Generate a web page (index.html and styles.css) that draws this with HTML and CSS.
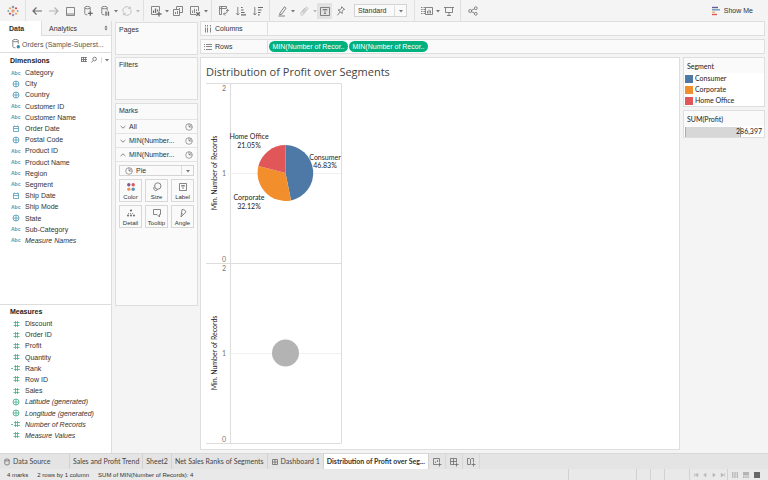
FILE: index.html
```html
<!DOCTYPE html>
<html lang="en">
<head>
<meta charset="utf-8">
<title>Distribution of Profit over Segments</title>
<link rel="stylesheet" href="styles.css">
</head>
<body>
<svg class="sprite" aria-hidden="true">
  <symbol id="globe" viewBox="0 0 10 8"><circle cx="5" cy="4" r="3"/><path d="M5 1v6M2 4h6"/></symbol>
  <symbol id="date" viewBox="0 0 10 8"><path d="M2.500 1.500h5v5h-5zM2.500 3.500h5M3.500 .5v1M6.500 .5v1"/></symbol>
  <symbol id="num" viewBox="0 0 10 8"><path d="M4.500 1v6M6.500 1v6M2.500 2.500h6M2.500 5.500h6"/></symbol>
  <symbol id="calc" viewBox="0 0 10 8"><path d="M4.500 1v6M6.500 1v6M3 2.500h6M3 5.500h6M0 4.500h2"/></symbol>
  <symbol id="caret" viewBox="0 0 6 6"><path d="M1 2h4L3 4.6z" fill="#777" stroke="none"/></symbol>
  <symbol id="down" viewBox="0 0 6 6"><path d="M.6 2L3 4.2 5.4 2"/></symbol>
  <symbol id="up" viewBox="0 0 6 6"><path d="M.6 4L3 1.8 5.4 4"/></symbol>
  <symbol id="pie" viewBox="0 0 8 8"><circle cx="4" cy="4" r="3.300"/><path d="M4 4V.7M4 4l2.300-2.300M4 4h3.300"/></symbol>
  <symbol id="db" viewBox="0 0 12 12"><ellipse cx="5.500" cy="2.600" rx="2.700" ry="1.200"/><path d="M2.800 2.600v6c0 .8 1 1.200 2.600 1.200M8.200 2.600v3.200"/></symbol>
</svg>

<header class="toolbar">
  <button class="tool logo" aria-label="Start page"><svg viewBox="0 0 12 12"><path d="M6 4v4M4 6h4" stroke="#e8762d"/><path d="M6 .8v2.400M4.800 2h2.400M6 8.800v2.400M4.800 10h2.400" stroke="#5b6591"/><path d="M3 2.200v2.200M1.900 3.300h2.200M9 7.600v2.200M7.900 8.700h2.200" stroke="#eb912c"/><path d="M9 2.200v2.200M7.900 3.300h2.200M3 7.600v2.200M1.900 8.700h2.200" stroke="#c72035"/><path d="M1.300 5.200v1.600M.5 6h1.600M10.700 5.200v1.600M9.900 6h1.600" stroke="#59879b"/></svg></button>
  <span class="sep"></span>
  <button class="tool" aria-label="Undo"><svg viewBox="0 0 12 12"><path d="M5.500 2.500L2 6l3.500 3.500M2 6h9" stroke-width="1.200"/></svg></button>
  <button class="tool pale" aria-label="Redo"><svg viewBox="0 0 12 12"><path d="M6.500 2.500L10 6 6.500 9.500M10 6H1" stroke-width="1.200"/></svg></button>
  <button class="tool" aria-label="Save"><svg viewBox="0 0 12 12"><path d="M1.500 2.500h8v8h-8z"/><path d="M2 8h7v2H2z" fill="#bbb" stroke="none"/></svg></button>
  <button class="tool" aria-label="New data source"><svg viewBox="0 0 12 12"><use href="#db"/><path d="M8.300 6v4.800M5.900 8.400h4.800" stroke-width="1.300"/></svg></button>
  <button class="tool" aria-label="Pause updates"><svg viewBox="0 0 12 12"><use href="#db"/><path d="M7 6.500v4.200M9.400 6.500v4.200" stroke-width="1.400"/></svg></button>
  <button class="drop" aria-label="Update options"><svg viewBox="0 0 6 6"><use href="#caret"/></svg></button>
  <button class="tool pale" aria-label="Refresh"><svg viewBox="0 0 12 12"><path d="M2.200 7.300A4 4 0 0 1 9 3.200M9.800 4.700A4 4 0 0 1 3 8.800M9.400 1.600v2H7.300M2.600 10.400v-2h2.100"/></svg></button>
  <button class="drop pale" aria-label="Refresh options"><svg viewBox="0 0 6 6"><use href="#caret"/></svg></button>
  <span class="sep"></span>
  <button class="tool" aria-label="New worksheet"><svg viewBox="0 0 12 12"><path d="M7 9.500H1.500v-8h8v4.500"/><path d="M3.500 8V5.600M5.500 8V3.400M7.500 6.500V4.500" stroke-width="1.200"/><path d="M9 6.500v5M6.500 9h5" stroke-width="1.300"/></svg></button>
  <button class="drop" aria-label="New sheet options"><svg viewBox="0 0 6 6"><use href="#caret"/></svg></button>
  <button class="tool" aria-label="Duplicate"><svg viewBox="0 0 12 12"><path d="M4.500 4.500v-3h6v6h-3M1.500 4.500h6v6h-6zM3.500 9V7M5.500 9V6M7.500 4V3"/></svg></button>
  <button class="tool" aria-label="Clear sheet"><svg viewBox="0 0 12 12"><path d="M7 9.500H1.500v-8h8v4.500M3.500 8V5.600M5.500 8V3.800M7.500 6V4.500"/><path d="M7.300 7.200l3.600 3.600M10.900 7.200l-3.600 3.600" stroke-width="1.300"/></svg></button>
  <button class="drop" aria-label="Clear options"><svg viewBox="0 0 6 6"><use href="#caret"/></svg></button>
  <span class="sep"></span>
  <button class="tool swap" aria-label="Swap rows and columns"><svg viewBox="0 0 12 12"><path d="M1.500 1.500h7v2h-5v6h-2zM3.500 1.500v2h-2M9.500 4.500c0 3-1 4.500-4 4.500M8 6l1.500-1.500L11 6M7 7.500L5.500 9 7 10.500"/></svg></button>
  <button class="tool" aria-label="Sort ascending"><svg viewBox="0 0 12 12"><path d="M2.800 2v8M1.200 8.300L2.800 10l1.600-1.700"/><path d="M6 2.500h1.600M6 5h2.600M6 7.500h3.600M6 9.800h5" stroke-width="1.200"/></svg></button>
  <button class="tool" aria-label="Sort descending"><svg viewBox="0 0 12 12"><path d="M2.800 2v8M1.200 8.300L2.800 10l1.600-1.700"/><path d="M6 2.500h5M6 5h3.600M6 7.500h2.600M6 9.800h1.600" stroke-width="1.200"/></svg></button>
  <span class="sep"></span>
  <button class="tool" aria-label="Highlight"><svg viewBox="0 0 12 12"><path d="M4 8l4.400-6.200 1.700 1.300L5.800 9.200 3.600 9.800zM2.500 11h6.500"/></svg></button>
  <button class="drop" aria-label="Highlight options"><svg viewBox="0 0 6 6"><use href="#caret"/></svg></button>
  <button class="tool pale" aria-label="Group"><svg viewBox="0 0 12 12"><path d="M3.800 7.600l3.800-4.800c1-1.200 2.800.2 1.800 1.400L5.200 9.500c-1.300 1.500-3.500-.1-2.200-1.700l3.700-4.600M4.800 8.300l3.600-4.500"/></svg></button>
  <button class="drop pale" aria-label="Group options"><svg viewBox="0 0 6 6"><use href="#caret"/></svg></button>
  <button class="tool on" aria-label="Show mark labels" aria-pressed="true"><svg viewBox="0 0 12 12"><path d="M1.500 2.500h9v8h-9zM4 5.500v-1h4v1M6 4.500v4M5 8.500h2"/></svg></button>
  <button class="tool" aria-label="Fix axes"><svg viewBox="0 0 12 12"><path d="M6.600 1.800l3 2.600-1.300.4-1.200 1.700.2 2L3 5l2.200-.3 1.300-1.600zM5 7L2.400 10.300"/></svg></button>
  <span class="pick fit"><select aria-label="Fit"><option>Standard</option><option>Entire View</option></select><svg viewBox="0 0 6 6"><use href="#caret"/></svg></span>
  <span class="sep"></span>
  <button class="tool" aria-label="Show cards"><svg viewBox="0 0 12 12"><path d="M0 2.500h4M0 4.500h4M0 6.500h4M0 8.500h4" stroke-dasharray="1 .5"/><path d="M4.500 2.500h7v7h-7zM6.500 8.500V6M8 8.500v-4M9.500 8.500v-3"/></svg></button>
  <button class="drop" aria-label="Card options"><svg viewBox="0 0 6 6"><use href="#caret"/></svg></button>
  <button class="tool" aria-label="Presentation mode"><svg viewBox="0 0 12 12"><path d="M1 2.500h10M2.500 2.500v5h7v-5M6 7.500v3M4 10.500h4"/></svg></button>
  <span class="sep"></span>
  <button class="tool" aria-label="Share"><svg viewBox="0 0 12 12"><circle cx="3.200" cy="6" r="1.500"/><circle cx="8.800" cy="3.200" r="1.400"/><circle cx="8.800" cy="8.800" r="1.400"/><path d="M4.500 5.300l3-1.500M4.500 6.700l3 1.500"/></svg></button>
  <button class="showme"><svg viewBox="0 0 10 10"><path d="M1 1.500h6" stroke="#6b5b95"/><path d="M1 3.800h8" stroke="#6f98c2"/><path d="M1 6.200h3" stroke="#f5b07a"/><path d="M1 8.500h5" stroke="#e15759"/></svg>Show Me</button>
</header>

<div class="work">
  <aside class="data">
    <div class="panes">
      <button class="pane current">Data</button>
      <button class="pane">Analytics<svg viewBox="0 0 6 8"><path d="M1.500 3.400h3L3 1.600zM1.500 4.600h3L3 6.400z" fill="#666" stroke="none"/></svg></button>
    </div>
    <a class="source" href="#"><svg viewBox="0 0 12 12"><use href="#db"/><circle cx="8.300" cy="8.800" r="1.700" fill="#3a8aa8" stroke="none"/></svg>Orders (Sample-Superst...</a>
    <section class="fields dims">
      <header><h2>Dimensions</h2>
        <button class="mini" aria-label="View data"><svg viewBox="0 0 8 8"><path d="M1 1.500h6M1 3.500h6M1 5.500h6M1.500 1v5M3.500 1v5M5.500 1v5"/></svg></button>
        <button class="mini" aria-label="Find field"><svg viewBox="0 0 8 8"><circle cx="4.600" cy="3" r="1.800"/><path d="M3.300 4.300L1.500 6.500"/></svg></button>
        <button class="mini more" aria-label="Menu"><svg viewBox="0 0 6 6"><use href="#caret"/></svg></button>
      </header>
      <ul>
        <li><i>Abc</i>Category</li>
        <li><svg><use href="#globe"/></svg>City</li>
        <li><svg><use href="#globe"/></svg>Country</li>
        <li><i>Abc</i>Customer ID</li>
        <li><i>Abc</i>Customer Name</li>
        <li><svg><use href="#date"/></svg>Order Date</li>
        <li><svg><use href="#globe"/></svg>Postal Code</li>
        <li><i>Abc</i>Product ID</li>
        <li><i>Abc</i>Product Name</li>
        <li><i>Abc</i>Region</li>
        <li><i>Abc</i>Segment</li>
        <li><svg><use href="#date"/></svg>Ship Date</li>
        <li><i>Abc</i>Ship Mode</li>
        <li><svg><use href="#globe"/></svg>State</li>
        <li><i>Abc</i>Sub-Category</li>
        <li class="auto"><i>Abc</i>Measure Names</li>
      </ul>
    </section>
    <section class="fields meas">
      <header><h2>Measures</h2></header>
      <ul>
        <li><svg><use href="#num"/></svg>Discount</li>
        <li><svg><use href="#num"/></svg>Order ID</li>
        <li><svg><use href="#num"/></svg>Profit</li>
        <li><svg><use href="#num"/></svg>Quantity</li>
        <li><svg><use href="#calc"/></svg>Rank</li>
        <li><svg><use href="#num"/></svg>Row ID</li>
        <li><svg><use href="#num"/></svg>Sales</li>
        <li class="auto"><svg><use href="#globe"/></svg>Latitude (generated)</li>
        <li class="auto"><svg><use href="#globe"/></svg>Longitude (generated)</li>
        <li class="auto"><svg><use href="#calc"/></svg>Number of Records</li>
        <li class="auto"><svg><use href="#num"/></svg>Measure Values</li>
      </ul>
    </section>
  </aside>

  <div class="cards">
    <section class="card pages"><h3>Pages</h3></section>
    <section class="card filters"><h3>Filters</h3></section>
    <section class="card marks">
      <h3>Marks</h3>
      <button class="layer"><svg viewBox="0 0 6 6"><use href="#down"/></svg><span>All</span><svg class="round" viewBox="0 0 8 8"><use href="#pie"/></svg></button>
      <button class="layer"><svg viewBox="0 0 6 6"><use href="#down"/></svg><span>MIN(Number...</span><svg class="round" viewBox="0 0 8 8"><use href="#pie"/></svg></button>
      <button class="layer"><svg viewBox="0 0 6 6"><use href="#up"/></svg><span>MIN(Number...</span><svg class="round" viewBox="0 0 8 8"><use href="#pie"/></svg></button>
      <div class="shelf-body">
        <span class="pick mark"><svg class="round" viewBox="0 0 8 8"><use href="#pie"/></svg><select aria-label="Mark type"><option>Pie</option><option>Bar</option></select><svg viewBox="0 0 6 6"><use href="#caret"/></svg></span>
        <div class="encodings">
          <button><svg viewBox="0 0 10 10"><g stroke="none"><circle cx="2.800" cy="2.800" r="1.700" fill="#7a5c91"/><circle cx="7.200" cy="2.800" r="1.700" fill="#e15759"/><circle cx="2.800" cy="7.200" r="1.700" fill="#f2955b"/><circle cx="7.200" cy="7.200" r="1.700" fill="#5b8fc0"/></g></svg>Color</button>
          <button><svg viewBox="0 0 10 10"><circle cx="5.800" cy="4" r="3.200"/><path d="M2.700 4.600a2 2 0 1 0 2.300 3.600l.6-1"/></svg>Size</button>
          <button><svg viewBox="0 0 10 10"><path d="M1.500 1.500h7v7h-7zM3.500 4.500v-1h3v1M5 3.500v3.500"/></svg>Label</button>
          <button><svg viewBox="0 0 10 10"><g fill="#666" stroke="none"><circle cx="5" cy="2.500" r="1.100"/><circle cx="2" cy="7.500" r="1"/><circle cx="5" cy="7.500" r="1"/><circle cx="8" cy="7.500" r="1"/></g><path d="M2 5.500h6" stroke-dasharray="1 1"/></svg>Detail</button>
          <button><svg viewBox="0 0 10 10"><path d="M1.500 1.500h7v5h-1v2.500L5 6.500H1.500z"/></svg>Tooltip</button>
          <button><svg viewBox="0 0 10 10"><path d="M3 9L4 1.500c2.500 0 3.800 1 3.800 2.600L3 9M3.600 5l1.500 1.600"/></svg>Angle</button>
        </div>
      </div>
    </section>
  </div>

  <main class="view">
    <div class="shelf"><div class="name"><svg viewBox="0 0 8 8"><path d="M1.500 0v1.500M3.500 0v1.500M6.500 0v1.500M1.500 2.500v5M3.500 2.500v5M6.500 2.500v5"/></svg>Columns</div></div>
    <div class="shelf"><div class="name"><svg viewBox="0 0 8 8"><path d="M0 1.500h1M0 3.500h1M0 6.500h1M2 1.500h6M2 3.500h6M2 6.500h6"/></svg>Rows</div><button class="pill">MIN(Number of Recor..</button><button class="pill">MIN(Number of Recor..</button></div>
    <div class="stage">
      <article class="canvas">
        <h1>Distribution of Profit over Segments</h1>
        <svg class="chart" viewBox="0 0 136 362" role="img" aria-label="Pie chart of profit share by segment">
          <g class="rule"><path d="M0 .5h135.500v360M24.500 .5v360M0 180.500h135.500M0 360.500h135.500"/></g>
          <g class="guide"><path d="M22 90.500h113M22 270.500h113"/></g>
          <path d="M79.500 90V62a28 28 0 0 1 5.500 55.400z" fill="#4e79a7"/>
          <path d="M79.500 90l5.500 27.400A28 28 0 0 1 52.400 83.100z" fill="#f28e2b"/>
          <path d="M79.500 90l-27.100-6.900A28 28 0 0 1 79.500 62z" fill="#e15759"/>
          <circle cx="79.500" cy="270" r="13.500" fill="#b3b3b3"/>
          <g class="tick"><text x="20" y="8">2</text><text x="20" y="93">1</text><text x="20" y="179">0</text><text x="20" y="188">2</text><text x="20" y="273">1</text><text x="20" y="359">0</text></g>
          <g class="axis"><text transform="translate(11 90) rotate(-90)">Min. Number of Records</text><text transform="translate(11 270) rotate(-90)">Min. Number of Records</text></g>
          <g class="slice"><text x="43" y="56">Home Office</text><text x="43" y="65">21.05%</text><text x="119" y="77">Consumer</text><text x="119" y="85">46.83%</text><text x="43" y="117">Corporate</text><text x="43" y="126">32.12%</text></g>
        </svg>
      </article>
      <div class="legends">
        <section class="legend">
          <h4>Segment</h4>
          <ul><li><i class="blue"></i>Consumer</li><li><i class="orange"></i>Corporate</li><li><i class="red"></i>Home Office</li></ul>
        </section>
        <section class="legend">
          <h4>SUM(Profit)</h4>
          <div class="range"><span class="fill"></span><span class="value">286,397</span></div>
        </section>
      </div>
    </div>
  </main>
</div>

<nav class="sheets">
  <a class="sheet origin" href="#"><svg viewBox="0 0 8 8"><ellipse cx="4" cy="2" rx="2.200" ry="1"/><path d="M1.800 2v4c0 1.300 4.400 1.300 4.400 0V2"/></svg>Data Source</a>
  <a class="sheet" href="#">Sales and Profit Trend</a>
  <a class="sheet" href="#">Sheet2</a>
  <a class="sheet" href="#">Net Sales Ranks of Segments</a>
  <a class="sheet" href="#"><svg viewBox="0 0 8 8"><path d="M1.500 1.500h5v5h-5zM1.500 4h5M4 1.500v5"/></svg>Dashboard 1</a>
  <a class="sheet current" href="#">Distribution of Profit over Seg...</a>
  <button class="add" aria-label="New worksheet"><svg viewBox="0 0 10 10"><path d="M5.500 7.500h-4v-6h6V5M3.500 6V4.500M5.500 5V3M7.500 5.500v4M5.500 7.500h4"/></svg></button>
  <button class="add" aria-label="New dashboard"><svg viewBox="0 0 10 10"><path d="M5.500 7.500h-4v-6h6V5M1.500 4.500h6M4.500 1.500v6M7.500 5.500v4M5.500 7.500h4"/></svg></button>
  <button class="add" aria-label="New story"><svg viewBox="0 0 10 10"><path d="M4.500 7.500v-5l-1-1h-2v6h3M4.500 2.500l1-1h2V5M7.500 5.500v4M5.500 7.500h4"/></svg></button>
</nav>

<footer class="status">
  <span>4 marks</span><span>2 rows by 1 column</span><span>SUM of MIN(Number of Records): 4</span>
  <div class="slots"><b class="wide"></b><b></b><b></b><b class="mid"></b>
    <div class="steps">
      <button aria-label="First"><svg viewBox="0 0 6 6"><path d="M1.500 1.300v3.400M4.800 1.300L2.300 3l2.500 1.700z" fill="#b5b5b5"/></svg></button>
      <button aria-label="Previous"><svg viewBox="0 0 6 6"><path d="M4 1.300L1.700 3 4 4.700z" fill="#b5b5b5"/></svg></button>
      <button aria-label="Next"><svg viewBox="0 0 6 6"><path d="M2 1.300L4.300 3 2 4.700z" fill="#b5b5b5"/></svg></button>
      <button aria-label="Last"><svg viewBox="0 0 6 6"><path d="M4.500 1.300v3.400M1.200 1.300L3.700 3 1.200 4.700z" fill="#b5b5b5"/></svg></button>
    </div>
    <div class="modes">
      <button aria-label="Sheet sorter"><svg viewBox="0 0 6 6"><path d="M0 1h6M0 3h6M0 5h6" stroke="#aaa" stroke-width="1.300" stroke-dasharray="1.400 .9"/></svg></button>
      <button aria-label="Filmstrip"><svg viewBox="0 0 6 6"><path d="M0 0h6v3.500H0zM0 4.300h1.500V6H0zM2.200 4.300h1.500V6H2.200zM4.500 4.300H6V6H4.500z" fill="#b5b5b5" stroke="none"/></svg></button>
      <button aria-label="Tabs"><svg viewBox="0 0 6 6"><path d="M0 0h6v6H0z" fill="#666" stroke="none"/></svg></button>
    </div>
  </div>
</footer>
</body>
</html>
```
FILE: styles.css
```css
* { box-sizing: border-box; }
body {
  margin: 0;
  height: 100vh;
  display: flex;
  flex-direction: column;
  background: #f4f4f4;
  color: #333;
  font: 7px/9px "Liberation Sans", Arial, sans-serif;
  overflow: hidden;
}
h1, h2, h3, h4, ul { margin: 0; padding: 0; font-size: inherit; font-weight: normal; }
ul { list-style: none; }
a { color: inherit; text-decoration: none; }
button, select { margin: 0; padding: 0; border: 0; background: none; color: inherit; font: inherit; }
svg { display: block; flex: none; fill: none; stroke: #6a6a6a; stroke-width: .8; }
.sprite { position: absolute; width: 0; height: 0; }

/* toolbar */
.toolbar { flex: none; display: flex; align-items: center; height: 21px; }
.tool { display: grid; place-items: center; width: 17px; height: 16px; }
.tool svg { width: 12px; height: 12px; }
.logo { width: 25px; }
.drop { display: grid; place-items: center; width: 5px; }
.drop svg, .pick > svg { width: 6px; height: 6px; }
.pale svg { opacity: .45; }
.sep { align-self: stretch; width: 1px; margin: 0 3px; background: #e0e0e0; }
.logo + .sep { margin: 0 2px 0 0; }
.on { width: 15px; background: #e2e2e2; }
.pick { display: flex; align-items: center; border: 1px solid #d4d4d4; background: #fafafa; }
.pick select { flex: 1; min-width: 0; appearance: none; }
.pick > svg:last-child { box-sizing: content-box; padding: 2px 2px 2px 3px; border-left: 1px solid #ddd; }
.fit { width: 53px; height: 13px; margin: 0 4px 0 5px; padding-left: 3px; }
.showme { display: flex; align-items: center; gap: 3px; margin: 0 15px 0 auto; }
.showme svg { width: 10px; height: 10px; stroke-width: 1.4; }

.work { flex: 1; min-height: 0; display: flex; }

/* data pane */
.data { flex: none; width: 112px; display: flex; flex-direction: column; background: #fff; border-right: 1px solid #ddd; }
.panes { display: flex; height: 15px; }
.pane { width: 41px; padding-left: 9px; text-align: left; }
.pane.current { font-weight: bold; }
.pane:last-child { flex: 1; display: flex; align-items: center; justify-content: space-between; padding: 0 2px 0 7px; background: #f4f4f4; border: solid #ddd; border-width: 0 0 1px 1px; }
.pane svg { width: 6px; height: 8px; }
.source { display: flex; align-items: center; height: 17px; padding-left: 10px; border-bottom: 1px solid #ddd; color: #555; }
.source svg { width: 12px; height: 12px; }
.fields header { display: flex; align-items: center; height: 14px; padding-left: 10px; }
.fields h2 { flex: 1; font-weight: bold; color: #222; }
.mini { width: 10px; }
.mini svg { width: 8px; height: 8px; margin: auto; }
.more { margin-left: 2px; border-left: 1px solid #ddd; }
.mini.more svg { width: 6px; height: 6px; }
.fields ul { display: grid; grid-auto-rows: 1fr; }
.dims { flex: 1; }
.dims ul { height: 179px; }
.meas { height: 149px; border-top: 1px solid #ddd; }
.meas header { height: 13px; }
.meas ul { height: 123px; }
.fields li { display: flex; align-items: center; gap: 4px; padding-left: 11px; }
.fields li svg { width: 10px; height: 8px; stroke: #4e9ab5; }
.fields li i { width: 10px; color: #4e9ab5; font: bold 5px/8px "Liberation Sans", sans-serif; }
.fields.meas li svg { stroke: #45b088; }
.auto { font-style: italic; }

/* cards */
.cards { flex: none; width: 86px; display: flex; flex-direction: column; gap: 2px; padding: 1px 0 0 3px; }
.card { border: 1px solid #dedede; background: #fafafa; }
.card h3 { padding: 2px 3px 4px; }
.pages { height: 33px; }
.filters { height: 43px; margin-bottom: 1px; }
.marks { height: 203px; }
.layer { display: flex; align-items: center; gap: 3px; width: 100%; height: 14px; padding: 0 4px; border-top: 1px solid #e4e4e4; text-align: left; }
.layer span { flex: 1; }
.layer svg { width: 6px; height: 6px; }
.layer .round, .pick .round { width: 8px; height: 8px; stroke-width: .6; }
.shelf-body { display: flex; flex-direction: column; gap: 3px; padding: 3px; border-top: 1px solid #e4e4e4; }
.mark { height: 11px; padding-left: 5px; gap: 3px; }
.encodings { display: grid; grid-template-columns: repeat(3, 1fr); gap: 3px; }
.encodings button { display: flex; flex-direction: column; align-items: center; justify-content: space-between; height: 23px; padding: 2px 0 0; border: 1px solid #d8d8d8; font-size: 6px; line-height: 8px; }
.encodings svg { width: 10px; height: 10px; }

/* shelves and view */
.view { flex: 1; min-width: 0; display: flex; flex-direction: column; gap: 3px; padding: 0 3px 3px 2px; }
.shelf { flex: none; display: flex; align-items: center; height: 15px; border: 1px solid #dedede; background: #fafafa; }
.name { display: flex; align-items: center; gap: 3px; width: 67px; height: 100%; padding-left: 3px; border-right: 1px solid #dedede; }
.name svg { width: 8px; height: 8px; }
.pill { width: 79px; height: 11px; margin-left: 1px; border-radius: 6px; background: #00b180; color: #fff; }
.stage { flex: 1; min-height: 0; display: flex; gap: 3px; }
.canvas { flex: 1; padding: 6px 5px; border: 1px solid #dedede; background: #fff; }
.canvas h1 { font: 11px/15px "Open Sans", sans-serif; color: #444; }
.chart { width: 136px; height: 362px; margin-top: 4px; font: 7px Lato, sans-serif; overflow: visible; stroke: none; }
.rule { stroke: #ddd; stroke-width: 1; }
.guide { stroke: #f0f0f0; stroke-width: 1; }
.tick { fill: #777; text-anchor: end; }
.axis, .slice { fill: #222; text-anchor: middle; }
.legends { flex: none; width: 82px; display: flex; flex-direction: column; gap: 3px; }
.legend { padding: 0 1px; border: 1px solid #dedede; background: #fff; font: 7px/11px Lato, sans-serif; color: #222; }
.legend h4 { margin: 0 -1px; padding: 3px 3px 1px; background: #fafafa; }
.legend li { display: flex; align-items: center; gap: 2px; height: 11px; }
.legend i { width: 8px; height: 8px; }
.blue { background: #4e79a7; }
.orange { background: #f28e2b; }
.red { background: #e15759; }
.range { display: grid; align-items: center; }
.range > * { grid-area: 1 / 1; }
.fill { width: 72%; height: 10px; background: #d7d7d7; border: solid #aaa; border-width: 0 1px; }
.value { padding-right: 1px; text-align: right; }

/* sheet tabs */
.sheets { flex: none; display: flex; height: 16px; border-top: 1px solid #d8d8d8; background: #e4e4e4; color: #444; font: 7px/9px Lato, sans-serif; }
.sheet { display: flex; align-items: center; gap: 2px; padding: 0 3px; border-right: 1px solid #d2d2d2; white-space: nowrap; }
.origin { width: 70px; }
.sheet svg { width: 8px; height: 8px; }
.sheet.current { background: #fff; color: #333; font-weight: bold; }
.add { display: grid; place-items: center; width: 17px; border-right: 1px solid #d8d8d8; }
.add svg { width: 10px; height: 10px; }

/* status bar */
.status { flex: none; display: flex; align-items: center; gap: 9px; height: 11px; padding: 0 8px 0 7px; background: #e9e9e9; font-size: 6px; line-height: 8px; }
.slots { align-self: stretch; display: flex; margin-left: auto; }
.slots b { width: 14px; border-left: 1px solid #d2d2d2; }
.slots .wide { width: 68px; }
.slots .mid { width: 25px; }
.steps, .modes { display: flex; align-items: center; border-left: 1px solid #d2d2d2; }
.steps { width: 38px; gap: 3px; padding-left: 3px; }
.steps svg { width: 6px; height: 6px; stroke: #b5b5b5; stroke-width: .6; }
.modes { gap: 5px; padding-left: 4px; }
.modes svg { width: 6px; height: 6px; }
```
